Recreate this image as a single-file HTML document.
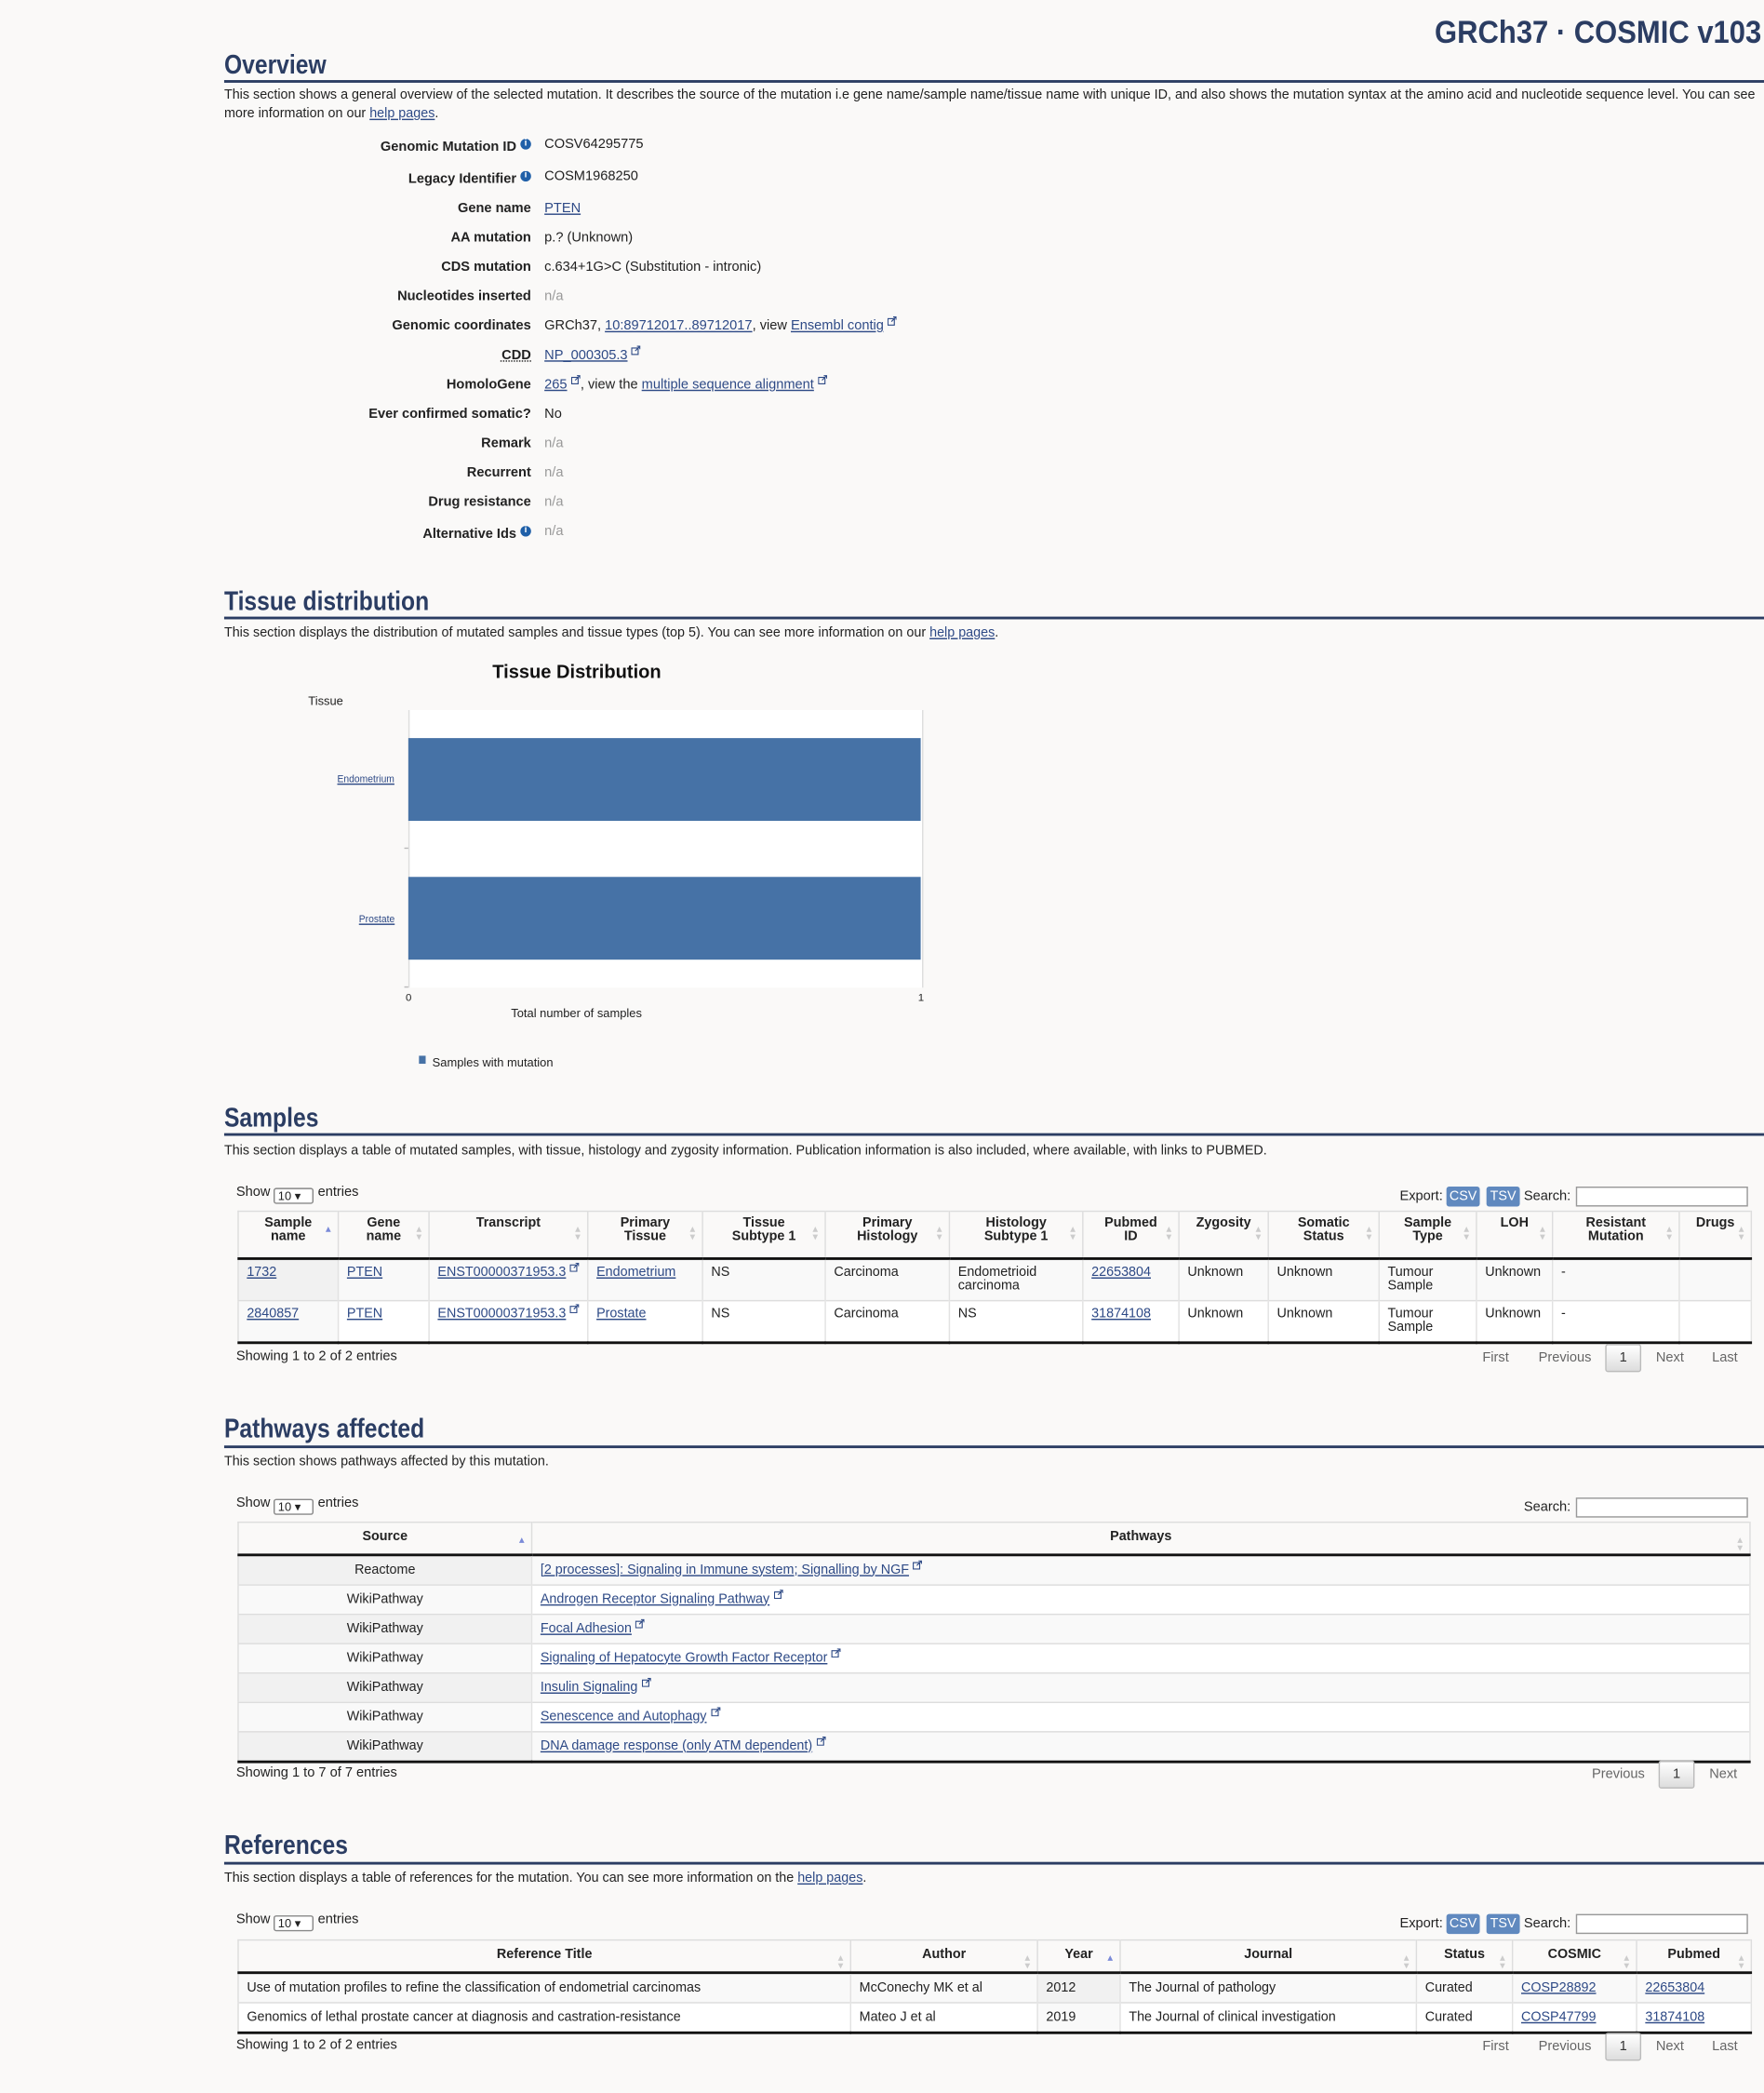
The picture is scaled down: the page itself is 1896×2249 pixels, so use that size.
<!DOCTYPE html>
<html><head><meta charset="utf-8">
<style>
html,body{margin:0;padding:0;background:#faf9f8;width:1896px;height:2249px;overflow:hidden}
#w{position:absolute;left:0;top:0;width:1322px;height:1568px;transform:scale(1.43419);transform-origin:0 0;font-family:"Liberation Sans",Arial,sans-serif;font-size:10.2px;color:#222}
.a{position:absolute;white-space:nowrap}
a{color:#2e4a86;text-decoration:underline}
h2{position:absolute;left:168px;margin:0;font-size:20px;font-weight:bold;color:#2b3d63;font-family:"Liberation Sans",sans-serif;transform:scaleX(0.86);transform-origin:0 0}
.rule{position:absolute;left:168px;width:1154px;height:2px;background:#2b3d63}
.p{position:absolute;left:168px;width:1150px;line-height:14px;font-size:10px}
.lab{position:absolute;right:924px;font-weight:bold;white-space:nowrap;text-align:right}
.val{position:absolute;left:408px;white-space:nowrap}
.na{color:#999}
.i{display:inline-block;width:8px;height:8px;border-radius:50%;background:#1f5fa8;color:#fff;font-size:7px;line-height:8px;text-align:center;font-weight:bold;vertical-align:4px;margin-left:3px}
.ext{display:inline-block;width:7px;height:7px;margin-left:3px;position:relative;top:-3px;vertical-align:baseline}
table{position:absolute;left:178px;width:1134px;border-collapse:collapse;font-size:10px;table-layout:fixed}
th{font-weight:bold;text-align:center;border-right:1px solid #ddd;border-bottom:2px solid #111;line-height:10px;padding:4px 6px;position:relative;vertical-align:top}
th:after{content:"";position:absolute;right:5px;top:11px;width:0;height:0;border-left:2.5px solid transparent;border-right:2.5px solid transparent;border-bottom:4px solid #ccc}
th:before{content:"";position:absolute;right:5px;top:17px;width:0;height:0;border-left:2.5px solid transparent;border-right:2.5px solid transparent;border-top:4px solid #ccc}
th.s:after{border-bottom-color:#7a8ad8}
th.s:before{display:none}
td{border-right:1px solid #e2e2e2;border-top:1px solid #ddd;padding:5px 6px;vertical-align:top;line-height:10px;white-space:nowrap;overflow:hidden}
table.pt td,table.rt td{padding:5px 6px 5px;line-height:11px;height:11px}
table{border-top:1px solid #ddd;border-bottom:2px solid #111;border-left:1px solid #ddd}
.btn{position:absolute;background:#6089bf;color:#fff;width:25px;text-align:center;font-size:10px;border-radius:2px;line-height:15px}
.inp{position:absolute;width:127px;height:13px;border:1px solid #999;background:#fff}
.sel{display:inline-block;width:30px;height:12px;border:1px solid #888;border-radius:2px;background:#fff;font-size:9px;line-height:11px;vertical-align:-3px;padding-left:2px;box-sizing:border-box}
.pg{position:absolute;color:#666}
.pb{position:absolute;width:25px;height:19px;border:1px solid #bbb;background:linear-gradient(#fff,#ddd);text-align:center;line-height:19px;color:#333;border-radius:2px}
</style></head><body><div id="w">

<div class="a" style="right:2px;top:11px;font-size:24px;font-weight:bold;color:#2b3d63;transform:scaleX(0.9);transform-origin:100% 0">GRCh37 · COSMIC v103</div>

<h2 style="top:38px">Overview</h2>
<div class="rule" style="top:60px"></div>
<div class="p" style="top:65px">This section shows a general overview of the selected mutation. It describes the source of the mutation i.e gene name/sample name/tissue name with unique ID, and also shows the mutation syntax at the amino acid and nucleotide sequence level. You can see more information on our <a>help pages</a>.</div>

<svg width="0" height="0" style="position:absolute"><defs><symbol id="ex" viewBox="0 0 8 8"><rect x="0.5" y="2" width="5.5" height="5.5" fill="none" stroke="#2e4a86" stroke-width="0.9"/><path d="M3.5 4.5L7.5 0.5M5 0.5H7.5V3" fill="none" stroke="#2e4a86" stroke-width="0.9"/></symbol></defs></svg>

<div class="lab" style="top:104px">Genomic Mutation ID<span class="i">i</span></div><div class="val" style="top:103px">COSV64295775</div>
<div class="lab" style="top:128px">Legacy Identifier<span class="i">i</span></div><div class="val" style="top:127px">COSM1968250</div>
<div class="lab" style="top:151px">Gene name</div><div class="val" style="top:151px"><a>PTEN</a></div>
<div class="lab" style="top:173px">AA mutation</div><div class="val" style="top:173px">p.? (Unknown)</div>
<div class="lab" style="top:195px">CDS mutation</div><div class="val" style="top:195px">c.634+1G&gt;C (Substitution - intronic)</div>
<div class="lab" style="top:217px">Nucleotides inserted</div><div class="val na" style="top:217px">n/a</div>
<div class="lab" style="top:239px">Genomic coordinates</div><div class="val" style="top:239px">GRCh37, <a>10:89712017..89712017</a>, view <a>Ensembl contig</a><svg class="ext"><use href="#ex"/></svg></div>
<div class="lab" style="top:261px;text-decoration:underline dotted">CDD</div><div class="val" style="top:261px"><a>NP_000305.3</a><svg class="ext"><use href="#ex"/></svg></div>
<div class="lab" style="top:283px">HomoloGene</div><div class="val" style="top:283px"><a>265</a><svg class="ext"><use href="#ex"/></svg>, view the <a>multiple sequence alignment</a><svg class="ext"><use href="#ex"/></svg></div>
<div class="lab" style="top:305px">Ever confirmed somatic?</div><div class="val" style="top:305px">No</div>
<div class="lab" style="top:327px">Remark</div><div class="val na" style="top:327px">n/a</div>
<div class="lab" style="top:349px">Recurrent</div><div class="val na" style="top:349px">n/a</div>
<div class="lab" style="top:371px">Drug resistance</div><div class="val na" style="top:371px">n/a</div>
<div class="lab" style="top:394px">Alternative Ids<span class="i">i</span></div><div class="val na" style="top:393px">n/a</div>

<h2 style="top:440px">Tissue distribution</h2>
<div class="rule" style="top:462px"></div>
<div class="p" style="top:468px">This section displays the distribution of mutated samples and tissue types (top 5). You can see more information on our <a>help pages</a>.</div>

<div class="a" style="left:369px;top:495px;font-size:14px;font-weight:bold;color:#111">Tissue Distribution</div>
<div class="a" style="left:231px;top:520px;font-size:9px">Tissue</div>
<div class="a" style="left:306px;top:532px;width:384px;height:208px;background:#fff;border-left:1px solid #ddd;border-right:1px solid #ddd"></div>
<div class="a" style="left:306px;top:553px;width:384px;height:62px;background:#4672a6"></div>
<div class="a" style="left:306px;top:657px;width:384px;height:62px;background:#4672a6"></div>
<div class="a" style="left:303px;top:635px;width:3px;height:1px;background:#bbb"></div>
<div class="a" style="left:303px;top:739px;width:3px;height:1px;background:#bbb"></div>
<div class="a" style="right:1026px;top:579px;font-size:8px;transform:scaleX(0.9);transform-origin:100% 0"><a>Endometrium</a></div>
<div class="a" style="right:1026px;top:684px;font-size:8px;transform:scaleX(0.9);transform-origin:100% 0"><a>Prostate</a></div>
<div class="a" style="left:304px;top:743px;font-size:8px">0</div>
<div class="a" style="left:688px;top:743px;font-size:8px">1</div>
<div class="a" style="left:383px;top:754px;font-size:9px">Total number of samples</div>
<div class="a" style="left:314px;top:791px;width:5px;height:6px;background:#4672a6"></div>
<div class="a" style="left:324px;top:791px;font-size:9px">Samples with mutation</div>

<h2 style="top:827px">Samples</h2>
<div class="rule" style="top:849px"></div>
<div class="p" style="top:856px">This section displays a table of mutated samples, with tissue, histology and zygosity information. Publication information is also included, where available, with links to PUBMED.</div>
<div class="a" style="left:177px;top:888px">Show <span class="sel">10 ▾</span> entries</div>
<div class="a" style="left:1049px;top:891px">Export:</div>
<div class="btn" style="left:1084px;top:889px">CSV</div>
<div class="btn" style="left:1114px;top:889px">TSV</div>
<div class="a" style="left:1142px;top:891px">Search:</div>
<div class="inp" style="left:1181px;top:889px"></div>
<table style="top:907px">
<colgroup><col style="width:75px"><col style="width:68px"><col style="width:119px"><col style="width:86px"><col style="width:92px"><col style="width:93px"><col style="width:100px"><col style="width:72px"><col style="width:67px"><col style="width:83px"><col style="width:73px"><col style="width:57px"><col style="width:95px"><col style="width:54px"></colgroup>
<tr style="height:35px"><th class="s">Sample<br>name</th><th>Gene<br>name</th><th>Transcript</th><th>Primary<br>Tissue</th><th>Tissue<br>Subtype 1</th><th>Primary<br>Histology</th><th>Histology<br>Subtype 1</th><th>Pubmed<br>ID</th><th>Zygosity</th><th>Somatic<br>Status</th><th>Sample<br>Type</th><th>LOH</th><th>Resistant<br>Mutation</th><th>Drugs</th></tr>
<tr style="height:31px;background:#f9f9f9"><td style="background:#f1f1f1"><a>1732</a></td><td><a>PTEN</a></td><td><a>ENST00000371953.3</a><svg class="ext"><use href="#ex"/></svg></td><td><a>Endometrium</a></td><td>NS</td><td>Carcinoma</td><td>Endometrioid<br>carcinoma</td><td><a>22653804</a></td><td>Unknown</td><td>Unknown</td><td>Tumour<br>Sample</td><td>Unknown</td><td>-</td><td></td></tr>
<tr style="height:31px;background:#fff"><td style="background:#f9f9f9"><a>2840857</a></td><td><a>PTEN</a></td><td><a>ENST00000371953.3</a><svg class="ext"><use href="#ex"/></svg></td><td><a>Prostate</a></td><td>NS</td><td>Carcinoma</td><td>NS</td><td><a>31874108</a></td><td>Unknown</td><td>Unknown</td><td>Tumour<br>Sample</td><td>Unknown</td><td>-</td><td></td></tr>
</table>
<div class="a" style="left:177px;top:1011px">Showing 1 to 2 of 2 entries</div>
<div class="pg" style="left:1111px;top:1012px">First</div>
<div class="pg" style="left:1153px;top:1012px">Previous</div>
<div class="pb" style="left:1203px;top:1007px">1</div>
<div class="pg" style="left:1241px;top:1012px">Next</div>
<div class="pg" style="left:1283px;top:1012px">Last</div>

<h2 style="top:1060px">Pathways affected</h2>
<div class="rule" style="top:1083px"></div>
<div class="p" style="top:1089px">This section shows pathways affected by this mutation.</div>
<div class="a" style="left:177px;top:1121px">Show <span class="sel">10 ▾</span> entries</div>
<div class="a" style="left:1142px;top:1124px">Search:</div>
<div class="inp" style="left:1181px;top:1122px"></div>
<table class="pt" style="top:1140px">
<colgroup><col style="width:220px"><col></colgroup>
<tr style="height:24px"><th class="s" style="vertical-align:middle">Source</th><th style="vertical-align:middle">Pathways</th></tr>
<tr style="background:#f9f9f9"><td style="background:#f1f1f1;text-align:center">Reactome</td><td><a>[2 processes]: Signaling in Immune system; Signalling by NGF</a><svg class="ext"><use href="#ex"/></svg></td></tr>
<tr style="background:#fff"><td style="background:#f9f9f9;text-align:center">WikiPathway</td><td><a>Androgen Receptor Signaling Pathway</a><svg class="ext"><use href="#ex"/></svg></td></tr>
<tr style="background:#f9f9f9"><td style="background:#f1f1f1;text-align:center">WikiPathway</td><td><a>Focal Adhesion</a><svg class="ext"><use href="#ex"/></svg></td></tr>
<tr style="background:#fff"><td style="background:#f9f9f9;text-align:center">WikiPathway</td><td><a>Signaling of Hepatocyte Growth Factor Receptor</a><svg class="ext"><use href="#ex"/></svg></td></tr>
<tr style="background:#f9f9f9"><td style="background:#f1f1f1;text-align:center">WikiPathway</td><td><a>Insulin Signaling</a><svg class="ext"><use href="#ex"/></svg></td></tr>
<tr style="background:#fff"><td style="background:#f9f9f9;text-align:center">WikiPathway</td><td><a>Senescence and Autophagy</a><svg class="ext"><use href="#ex"/></svg></td></tr>
<tr style="background:#f9f9f9"><td style="background:#f1f1f1;text-align:center">WikiPathway</td><td><a>DNA damage response (only ATM dependent)</a><svg class="ext"><use href="#ex"/></svg></td></tr>
</table>
<div class="a" style="left:177px;top:1323px">Showing 1 to 7 of 7 entries</div>
<div class="pg" style="left:1193px;top:1324px">Previous</div>
<div class="pb" style="left:1243px;top:1319px">1</div>
<div class="pg" style="left:1281px;top:1324px">Next</div>

<h2 style="top:1372px">References</h2>
<div class="rule" style="top:1395px"></div>
<div class="p" style="top:1401px">This section displays a table of references for the mutation. You can see more information on the <a>help pages</a>.</div>
<div class="a" style="left:177px;top:1433px">Show <span class="sel">10 ▾</span> entries</div>
<div class="a" style="left:1049px;top:1436px">Export:</div>
<div class="btn" style="left:1084px;top:1434px">CSV</div>
<div class="btn" style="left:1114px;top:1434px">TSV</div>
<div class="a" style="left:1142px;top:1436px">Search:</div>
<div class="inp" style="left:1181px;top:1434px"></div>
<table class="rt" style="top:1453px">
<colgroup><col style="width:459px"><col style="width:140px"><col style="width:62px"><col style="width:222px"><col style="width:72px"><col style="width:93px"><col style="width:86px"></colgroup>
<tr style="height:24px"><th style="vertical-align:middle">Reference Title</th><th style="vertical-align:middle">Author</th><th class="s" style="vertical-align:middle">Year</th><th style="vertical-align:middle">Journal</th><th style="vertical-align:middle">Status</th><th style="vertical-align:middle">COSMIC</th><th style="vertical-align:middle">Pubmed</th></tr>
<tr style="background:#f9f9f9"><td>Use of mutation profiles to refine the classification of endometrial carcinomas</td><td>McConechy MK et al</td><td style="background:#f1f1f1">2012</td><td>The Journal of pathology</td><td>Curated</td><td><a>COSP28892</a></td><td><a>22653804</a></td></tr>
<tr style="background:#fff"><td>Genomics of lethal prostate cancer at diagnosis and castration-resistance</td><td>Mateo J et al</td><td style="background:#f9f9f9">2019</td><td>The Journal of clinical investigation</td><td>Curated</td><td><a>COSP47799</a></td><td><a>31874108</a></td></tr>
</table>
<div class="a" style="left:177px;top:1527px">Showing 1 to 2 of 2 entries</div>
<div class="pg" style="left:1111px;top:1528px">First</div>
<div class="pg" style="left:1153px;top:1528px">Previous</div>
<div class="pb" style="left:1203px;top:1523px">1</div>
<div class="pg" style="left:1241px;top:1528px">Next</div>
<div class="pg" style="left:1283px;top:1528px">Last</div>

</div></body></html>
